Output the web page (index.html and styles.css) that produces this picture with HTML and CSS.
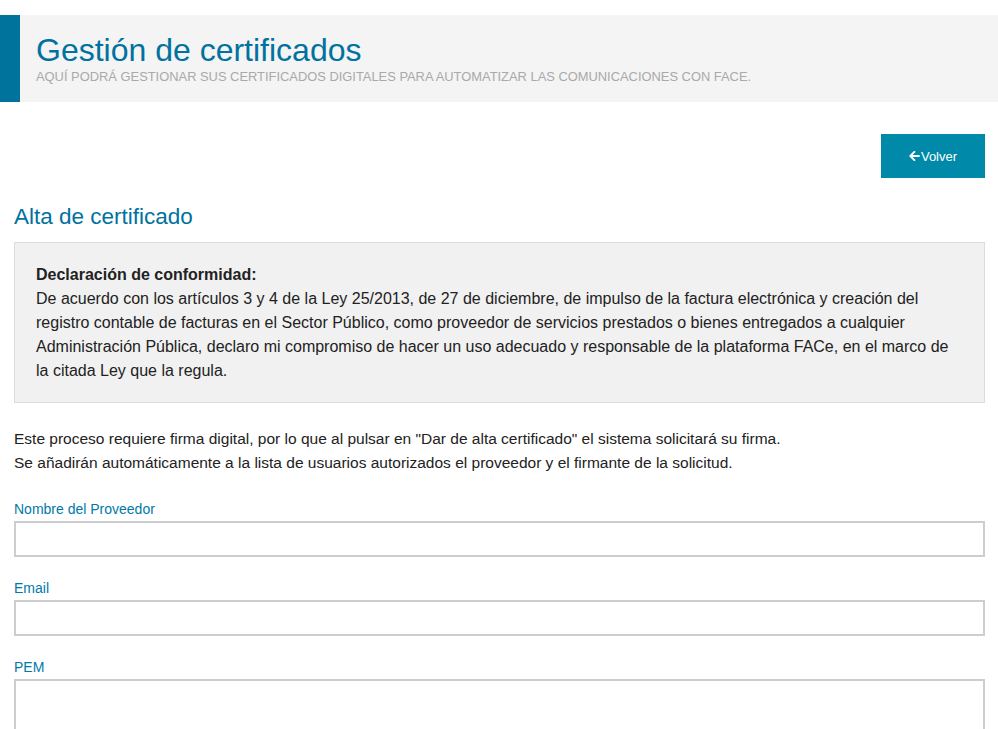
FILE: index.html
```html
<!DOCTYPE html>
<html lang="es">
<head>
    <meta charset="UTF-8">
    <meta name="viewport" content="width=device-width, initial-scale=1.0">
    <title>Gestión de certificados</title>
    <link rel="stylesheet" href="styles.css">
</head>
<body>
    <!-- Page header -->
    <div class="page-header">
        <h1>Gestión de certificados</h1>
        <p class="subtitle">Aquí podrá gestionar sus certificados digitales para automatizar las comunicaciones con FACe.</p>
    </div>

    <div class="content">
        <div class="actions">
            <button class="btn-back">
                <svg class="icon" viewBox="0 0 448 512" width="11" height="12"><path fill="currentColor" d="M257.5 445.1l-22.2 22.2c-9.4 9.4-24.6 9.4-33.9 0L7 273c-9.4-9.4-9.4-24.6 0-33.9L201.4 44.7c9.4-9.4 24.6-9.4 33.9 0l22.2 22.2c9.5 9.5 9.3 25-.4 34.3L136.6 216H424c13.3 0 24 10.7 24 24v32c0 13.3-10.7 24-24 24H136.6l120.5 114.8c9.8 9.3 10 24.8.4 34.3z"/></svg>Volver
            </button>
        </div>

        <h2>Alta de certificado</h2>

        <div class="notice">
            <strong>Declaración de conformidad:</strong><br>
            De acuerdo con los artículos 3 y 4 de la Ley 25/2013, de 27 de diciembre, de impulso de la factura electrónica y creación del registro contable de facturas en el Sector Público, como proveedor de servicios prestados o bienes entregados a cualquier Administración Pública, declaro mi compromiso de hacer un uso adecuado y responsable de la plataforma FACe, en el marco de la citada Ley que la regula.
        </div>

        <p class="info">
            Este proceso requiere firma digital, por lo que al pulsar en "Dar de alta certificado" el sistema solicitará su firma.<br>
            Se añadirán automáticamente a la lista de usuarios autorizados el proveedor y el firmante de la solicitud.
        </p>

        <form class="cert-form">
            <label for="nombre">Nombre del Proveedor</label>
            <input type="text" id="nombre">

            <label for="email">Email</label>
            <input type="text" id="email">

            <label for="pem">PEM</label>
            <textarea id="pem" rows="6"></textarea>
        </form>
    </div>
</body>
</html>
```

FILE: styles.css
```css
body {
    margin: 0;
    padding: 15px 0 0;
    font-family: 'Liberation Sans', Arial, sans-serif;
    color: #222;
    background-color: #fff;
}
.page-header {
    background-color: #f4f4f4;
    border-left: 20px solid #00739c;
    padding: 16px 16px 0;
    height: 71px;
}
.page-header h1 {
    margin: 0;
    font-size: 32px;
    font-weight: normal;
    color: #0072a0;
    line-height: 38px;
}
.subtitle {
    margin: 0;
    font-size: 12.9px;
    color: #a9a9a9;
    text-transform: uppercase;
    line-height: 16px;
}
.content {
    padding: 0 13px 0 14px;
}
.actions {
    display: flex;
    justify-content: flex-end;
    margin-top: 32px;
}
.btn-back {
    display: flex;
    align-items: center;
    justify-content: center;
    width: 104px;
    height: 44px;
    background-color: #0089a8;
    color: #fff;
    border: none;
    font-family: inherit;
    font-size: 13px;
    cursor: pointer;
}
.btn-back .icon {
    margin-right: 1px;
}
h2 {
    margin: 26px 0 12px;
    font-size: 22.5px;
    font-weight: normal;
    color: #0072a0;
    line-height: 26px;
}
.notice {
    background-color: #f1f1f1;
    border: 1px solid #dcdcdc;
    padding: 20px 21px 19px;
    font-size: 16px;
    line-height: 24px;
}
.info {
    margin: 24px 0 0;
    font-size: 15.5px;
    line-height: 24px;
}
.cert-form {
    display: flex;
    flex-direction: column;
    margin-top: 25px;
}
.cert-form label {
    font-size: 14px;
    color: #0079a8;
    line-height: 18px;
    margin-bottom: 3px;
}
.cert-form input,
.cert-form textarea {
    box-sizing: border-box;
    width: 100%;
    height: 36px;
    border: 2px solid #cdcdcd;
    background-color: #fff;
    margin-bottom: 22px;
    font-family: inherit;
    font-size: 14px;
}
.cert-form textarea {
    height: 110px;
    resize: none;
}
```
